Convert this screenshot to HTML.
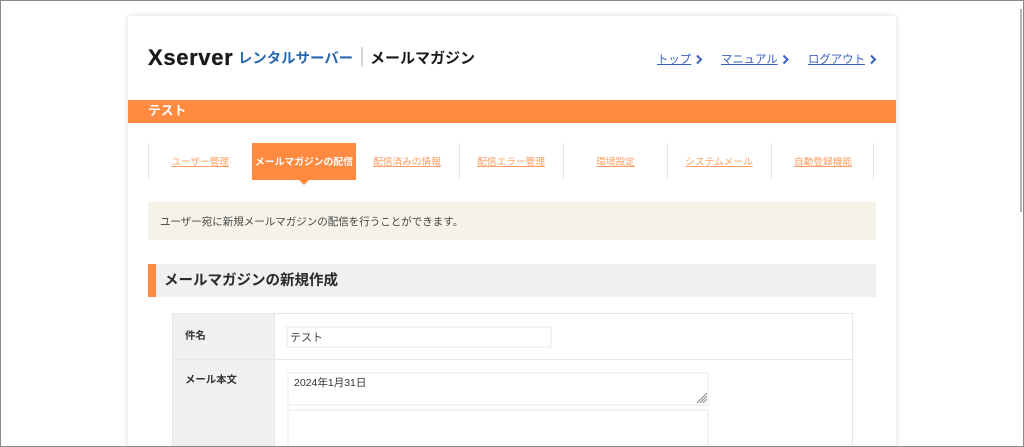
<!DOCTYPE html>
<html lang="ja"><head><meta charset="utf-8"><title>メールマガジン</title>
<style>
html,body{margin:0;padding:0;width:1024px;height:447px;overflow:hidden;background:#fff}
body{position:relative;font-family:"Liberation Sans","Noto Sans CJK JP",sans-serif;color:#333}
div,a,span{position:absolute;white-space:nowrap}
.clip{left:0;top:0;width:1024px;height:447px;overflow:hidden}
.frame{left:0;top:0;width:1022px;height:445px;border:1px solid #8a8a8a;z-index:10;pointer-events:none}
.thumb{left:1020px;top:9px;width:2px;height:203px;background:#b4b4b4;z-index:11}
.card{left:128px;top:16px;width:768px;height:440px;background:#fff;box-shadow:0 0 6px rgba(0,0,0,.14)}
.top a{top:51px;font-size:11.400px;line-height:18px;color:#3a5fc0;text-decoration:underline}
.nav{top:155px;height:16px;line-height:16px;font-size:9.700px;color:#ff9f66;text-decoration:underline;text-align:center;width:104px}
.sep{top:143px;width:1px;height:37px;background:#e6e6e6}
.box{border:2px solid #f4f4f4}
</style></head><body>
<div class="clip">
<div class="card"></div>

<div style="left:148px;top:44px;font-size:22px;font-weight:700;line-height:28px;color:#1a1a1a;letter-spacing:.65px;-webkit-text-stroke:.3px #1a1a1a">Xserver</div>
<div style="left:238px;top:49px;font-size:14.400px;font-weight:700;line-height:21px;color:#2a68ae">レンタルサーバー</div>
<div style="left:361px;top:47px;width:2px;height:20px;background:#d6d6d6"></div>
<div style="left:370px;top:48px;font-size:15px;font-weight:700;line-height:22px;color:#1a1a1a">メールマガジン</div>

<div class="top">
<a href="#" style="left:657px">トップ</a>
<a href="#" style="left:721px">マニュアル</a>
<a href="#" style="left:808px">ログアウト</a>
</div>
<svg style="position:absolute;left:0;top:0" width="1024" height="447" fill="none" stroke="#3a5fc0" stroke-width="2">
<path d="M697 55.500l4 4-4 4M783.500 55.500l4 4-4 4M871 55.500l4 4-4 4"/>
<path d="M299 180h10l-5 5z" fill="#ff8a40" stroke="none"/>
<path d="M697 403l10-10M700 403l7-7M703 403l4-4" stroke="#888" stroke-width="1"/>
</svg>

<div style="left:128px;top:100px;width:768px;height:23px;background:#ff8a40"></div>
<div style="left:148px;top:100px;font-size:12.800px;font-weight:700;line-height:22px;color:#fff">テスト</div>

<div class="sep" style="left:148px"></div>
<div class="sep" style="left:459px"></div>
<div class="sep" style="left:563px"></div>
<div class="sep" style="left:667px"></div>
<div class="sep" style="left:771px"></div>
<div class="sep" style="left:873px"></div>
<div style="left:252px;top:143px;width:104px;height:37px;background:#ff8a40"></div>
<a class="nav" href="#" style="left:148px">ユーザー管理</a>
<div class="nav" style="left:252px;color:#fff;font-weight:700;text-decoration:none;font-size:9.800px">メールマガジンの配信</div>
<a class="nav" href="#" style="left:355px">配信済みの情報</a>
<a class="nav" href="#" style="left:459px">配信エラー管理</a>
<a class="nav" href="#" style="left:564px;width:103px">環境設定</a>
<a class="nav" href="#" style="left:667px">システムメール</a>
<a class="nav" href="#" style="left:771px">自動登録機能</a>

<div style="left:148px;top:202px;width:728px;height:38px;background:#f5f3e8"></div>
<div style="left:160px;top:213px;font-size:10.500px;line-height:18px;color:#444">ユーザー宛に新規メールマガジンの配信を行うことができます。</div>

<div style="left:148px;top:264px;width:728px;height:33px;background:#f0f0f0"></div>
<div style="left:148px;top:264px;width:8px;height:33px;background:#ff8a40"></div>
<div style="left:164px;top:271px;font-size:14.500px;font-weight:700;line-height:21px;color:#2a2a2a">メールマガジンの新規作成</div>

<div style="left:172px;top:313px;width:679px;height:140px;border:1px solid #e6e6e6"></div>
<div style="left:173px;top:314px;width:101px;height:140px;background:#f0f0f0;border-right:1px solid #e6e6e6"></div>
<div style="left:172px;top:359px;width:680px;height:1px;background:#e6e6e6"></div>
<div style="left:185px;top:329px;font-size:10.400px;font-weight:700;line-height:16px;color:#333">件名</div>
<div style="left:185px;top:373px;font-size:10.400px;font-weight:700;line-height:16px;color:#333">メール本文</div>

<div class="box" style="left:286px;top:326px;width:262px;height:18px"></div>
<div style="left:290px;top:329px;font-size:11px;line-height:18px;color:#444">テスト</div>
<div class="box" style="left:287px;top:372px;width:418px;height:30px"></div>
<div style="left:294px;top:375px;font-size:10.500px;line-height:16px;color:#333">2024年1月31日</div>
<div class="box" style="left:287px;top:409px;width:418px;height:40px"></div>

<div class="frame"></div>
<div class="thumb"></div>
</div>
</body></html>
